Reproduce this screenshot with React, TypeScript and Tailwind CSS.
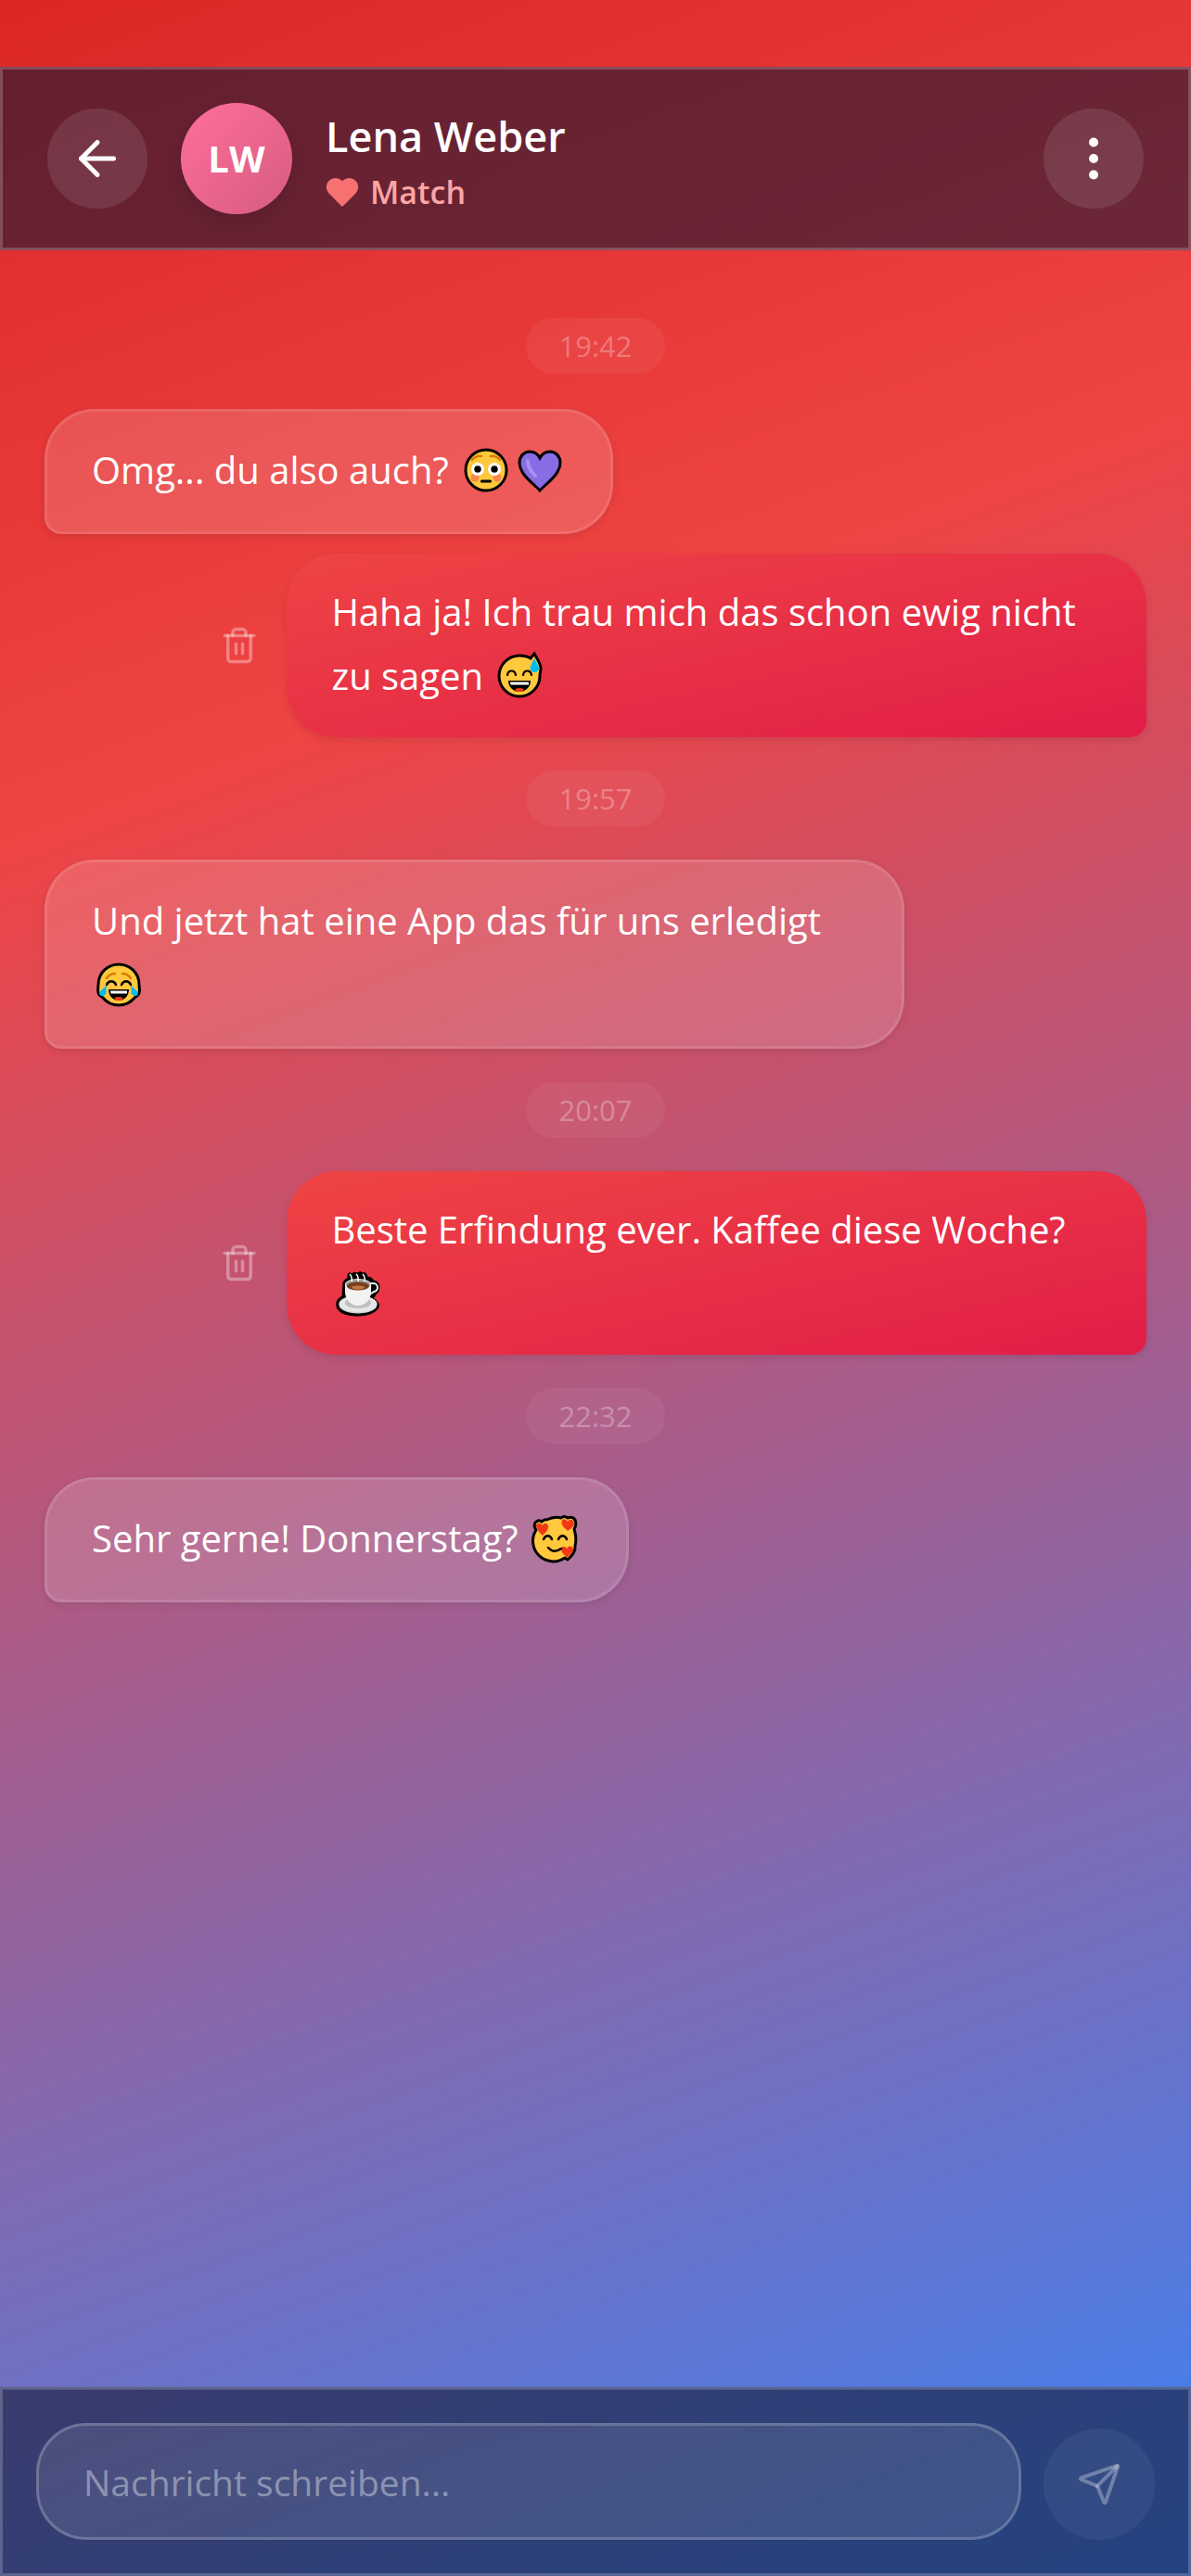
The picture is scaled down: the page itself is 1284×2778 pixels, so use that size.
import type { ReactNode } from "react";
import { ArrowLeft, EllipsisVertical, Send, Trash2 } from "lucide-react";
import { FiHeart } from "react-icons/fi";

type Item =
  | { kind: "time"; value: string }
  | { kind: "in" | "out"; text: string; emojis: ReactNode };

function Emoji({ label, children }: { label: string; children: ReactNode }) {
  return (
    <svg
      viewBox="0 0 56 56"
      role="img"
      aria-label={label}
      className="mx-px inline-block size-14 align-[-13px]"
    >
      {children}
    </svg>
  );
}

function Flushed() {
  return (
    <Emoji label="Errötetes Gesicht">
      <circle cx="29" cy="28" r="22" fill="#ffc83d" stroke="#000" strokeWidth="3" />
      <circle cx="17" cy="36" r="4.5" fill="#f7894a" />
      <circle cx="41" cy="36" r="4.5" fill="#f7894a" />
      <path d="M14 17q4-5 10-4M44 17q-4-5-10-4" fill="none" stroke="#d67d00" strokeWidth="2.5" strokeLinecap="round" />
      <circle cx="20" cy="27" r="7" fill="#fff" />
      <circle cx="38" cy="27" r="7" fill="#fff" />
      <circle cx="20" cy="27" r="3.7" />
      <circle cx="38" cy="27" r="3.7" />
      <path d="M24.5 40h9" stroke="#000" strokeWidth="3.2" strokeLinecap="round" />
    </Emoji>
  );
}

function PurpleHeart() {
  return (
    <Emoji label="Lila Herz">
      <path
        d="M29 50C23 43 7 33 7 20C7 13 12 8 18 8C23 8 27 11 29 15C31 11 35 8 40 8C46 8 51 13 51 20C51 33 35 43 29 50Z"
        fill="#886ce4"
        stroke="#000"
        strokeWidth="3"
      />
      <path d="M16 18q0 8 8 16" fill="none" stroke="#a48ff0" strokeWidth="4" strokeLinecap="round" />
    </Emoji>
  );
}

function SweatSmile() {
  return (
    <Emoji label="Grinsendes Gesicht mit Schweißtropfen">
      <path
        d="M28 6C33 6 37 7 40 9L44 4C46 8 51 14 51 20C51 23 50 24 50 28A22 22 0 1 1 28 6Z"
        fill="#ffc83d"
        stroke="#000"
        strokeWidth="3"
      />
      <path d="M44 9C46 13 49 17 49 20A4.8 4.8 0 0 1 39.5 20C39.5 17 42 13 44 9Z" fill="#00bcf2" />
      <path d="M15 27c1-6 8-6 9 0M32 27c1-6 8-6 9 0" fill="none" stroke="#000" strokeWidth="2.2" strokeLinecap="round" />
      <path d="M16 33h24a12 12 0 0 1-24 0Z" />
      <path d="M18 34.5h20v3H18.5Z" fill="#fff" />
      <ellipse cx="28" cy="43" rx="4.5" ry="2" fill="#f03a17" />
    </Emoji>
  );
}

function TearsOfJoy() {
  return (
    <Emoji label="Gesicht mit Freudentränen">
      <path
        d="M28 6C40 6 50 15 50 28C50 31 51 32 50 37C49 40 47 40 45 42A22 22 0 0 1 11 42C9 40 7 40 6 37C5 32 6 31 6 28C6 15 16 6 28 6Z"
        fill="#ffc83d"
        stroke="#000"
        strokeWidth="3"
      />
      <path d="M15 21q3-5 9-5M41 21q-3-5-9-5" fill="none" stroke="#d67d00" strokeWidth="2.5" strokeLinecap="round" />
      <path d="M15 28c2-5 8-5 10 0M31 28c2-5 8-5 10 0" fill="none" stroke="#000" strokeWidth="2.5" strokeLinecap="round" />
      <path d="M14.5 29v8a4.5 4.5 0 0 1-7 2C6 36 11 32 14.5 29ZM41.5 29v8a4.5 4.5 0 0 0 7 2C50 36 45 32 41.5 29Z" fill="#00bcf2" />
      <path d="M17 33h22a11 12 0 0 1-22 0Z" />
      <path d="M19 34.5h18v3H19.5Z" fill="#fff" />
      <ellipse cx="28" cy="43" rx="4.5" ry="2" fill="#f03a17" />
    </Emoji>
  );
}

function Coffee() {
  return (
    <Emoji label="Heißgetränk">
      <path
        d="M17 7q2-3 4 0q2-3 6-1q4-3 6 0q2-2 4 1l1 3q5 0 7 4q6 1 6 7q0 6-4 8q-1 3-3 4q8 4 6 10c-3 6-13 9-23 9S6 49 5 42c-1-5 1-9 6-11l1-15q1-3 5-5Z"
        stroke="#000"
        strokeLinejoin="round"
      />
      <ellipse cx="28" cy="40" rx="20.5" ry="9.5" fill="#d0d0d0" />
      <ellipse cx="28" cy="39" rx="20.5" ry="9" fill="#e6e6e6" />
      <ellipse cx="28" cy="38" rx="14" ry="6" fill="#c0c0c0" />
      <path d="M41 17h3a4 4 0 0 1 1 9l-6 4" fill="none" stroke="#f2f2f2" strokeWidth="2" />
      <path d="M14 18a14 6 0 0 1 28 0v8c0 8-6 15-14 15s-14-7-14-15Z" fill="#f2f2f2" />
      <ellipse cx="28" cy="18" rx="13" ry="5" fill="#9a9a9a" />
      <ellipse cx="28" cy="20" rx="12" ry="4.5" fill="#7a3f1d" />
      <ellipse cx="28" cy="21.5" rx="7" ry="2" fill="#b97a45" />
      <path d="M19 7q3 3 2 8M26 7q3 3 2 8M33 7q3 3 2 8" fill="none" stroke="#fff" strokeWidth="1.5" />
    </Emoji>
  );
}

function LovingFace() {
  return (
    <Emoji label="Lächelndes Gesicht mit Herzen">
      <path
        d="M19 8Q28 4 35 6Q38 3 42 6Q47 4 50 8Q52 13 49 18Q52 28 50 36Q51 43 42 51L39 49A22 22 0 0 1 8 19Q5 15 7 11Q11 7 14 10Q17 7 19 8Z"
        fill="#ffc83d"
        stroke="#000"
        strokeWidth="3"
        strokeLinejoin="round"
      />
      <path d="M15 25C11 21 8 18 8 14.5C8 11 13 10 14.5 14C17 10 21 12 21 15.5C21 19 18 22 15 25ZM42 20C38 16 35 14 35.5 10C36 6.5 40 6 42 10C44 6 49 8 49 11.5C49 15 46 17 42 20ZM41 49C38 45 35 43 35 39.5C35 36 39 36 41 39C43 35 48 36 48 40C48 43 44 46 41 49Z" fill="#f03a17" />
      <path d="M16 29c2-5 7-5 9 0M32 29c2-5 7-5 9 0M21 38q6 7 14 1" fill="none" stroke="#000" strokeWidth="2.5" strokeLinecap="round" />
    </Emoji>
  );
}

const ITEMS: Item[] = [
  { kind: "time", value: "19:42" },
  { kind: "in", text: "Omg... du also auch?", emojis: <><Flushed /><PurpleHeart /></> },
  { kind: "out", text: "Haha ja! Ich trau mich das schon ewig nicht zu sagen", emojis: <SweatSmile /> },
  { kind: "time", value: "19:57" },
  { kind: "in", text: "Und jetzt hat eine App das für uns erledigt", emojis: <TearsOfJoy /> },
  { kind: "time", value: "20:07" },
  { kind: "out", text: "Beste Erfindung ever. Kaffee diese Woche?", emojis: <Coffee /> },
  { kind: "time", value: "22:32" },
  { kind: "in", text: "Sehr gerne! Donnerstag?", emojis: <LovingFace /> },
];

function TimeDivider({ value }: { value: string }) {
  return (
    <li className="my-9 flex justify-center first:mt-0 first:mb-[38px]">
      <time className="rounded-[30px] bg-white/5 px-[35px] text-[31px] leading-[60px] text-white/30">
        {value}
      </time>
    </li>
  );
}

function Incoming({ children }: { children: ReactNode }) {
  return (
    <li className="flex">
      <p className="max-w-[78%] rounded-[54px] rounded-bl-[18px] border-3 border-white/10 bg-white/15 px-12 pt-7 pb-8 text-[40px] leading-[69px] shadow-[0_3px_9px_rgba(0,0,0,0.1)]">
        {children}
      </p>
    </li>
  );
}

function Outgoing({ children }: { children: ReactNode }) {
  return (
    <li className="flex items-center justify-end gap-[30px] [li+&]:mt-[21px] [.my-9+&]:mt-0">
      <button type="button" aria-label="Nachricht löschen" className="text-white/35">
        <Trash2 className="size-[42px]" />
      </button>
      <p className="max-w-[78%] rounded-[54px] rounded-br-[18px] bg-linear-to-br/srgb from-[#ef4444] to-[#e11d48] px-12 pt-7 pb-8 text-[40px] leading-[69px] shadow-[0_3px_9px_rgba(0,0,0,0.1)]">
        {children}
      </p>
    </li>
  );
}

export default function App() {
  return (
    <div className="flex min-h-screen flex-col bg-linear-[160deg,#dc2626_0%,#ef4444_28%,#3b82f6_100%] pt-[72px] font-['Open_Sans','Noto_Sans',sans-serif] text-white">
      <header className="flex items-center gap-9 border-3 border-white/20 bg-[#151934]/60 px-12 py-9">
        <button
          type="button"
          aria-label="Zurück"
          className="flex size-[108px] shrink-0 items-center justify-center rounded-full bg-white/10"
        >
          <ArrowLeft className="size-15" />
        </button>
        <div className="flex size-30 shrink-0 items-center justify-center rounded-full bg-linear-135 from-[#ff6f9c] to-[#d65c80] text-[40px] font-bold shadow-[0_12px_20px_rgba(0,0,0,0.12)]">
          LW
        </div>
        <div className="min-w-0 flex-1">
          <h1 className="text-[45px] leading-[72px] font-semibold">Lena Weber</h1>
          <p className="flex items-center gap-3 text-[34px] leading-[48px] font-semibold text-[#fca5a5]">
            <FiHeart className="size-9 fill-current text-[#f87171]" />
            Match
          </p>
        </div>
        <button
          type="button"
          aria-label="Mehr Optionen"
          className="flex size-[108px] shrink-0 items-center justify-center rounded-full bg-white/10"
        >
          <EllipsisVertical className="size-15" />
        </button>
      </header>

      <main className="flex-1 px-12 pt-[73px]">
        <ol>
          {ITEMS.map((item, i) => {
            if (item.kind === "time") return <TimeDivider key={i} value={item.value} />;
            const Bubble = item.kind === "in" ? Incoming : Outgoing;
            return (
              <Bubble key={i}>
                {item.text} {item.emojis}
              </Bubble>
            );
          })}
        </ol>
      </main>

      <form
        className="flex items-end gap-6 border-3 border-white/20 bg-[#151934]/60 p-9"
        onSubmit={(e) => e.preventDefault()}
      >
        <input
          type="text"
          aria-label="Nachricht"
          placeholder="Nachricht schreiben..."
          className="h-[126px] min-w-0 flex-1 rounded-[54px] border-3 border-white/20 bg-white/10 px-12 text-[39px] outline-none placeholder:text-white/40"
        />
        <button
          type="submit"
          aria-label="Senden"
          className="flex size-30 shrink-0 items-center justify-center rounded-full bg-white/5 text-white/30"
        >
          <Send className="size-12" />
        </button>
      </form>
    </div>
  );
}
